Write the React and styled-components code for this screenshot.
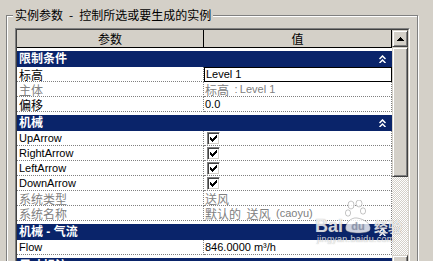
import React from 'react';
import styled, { createGlobalStyle } from 'styled-components';

const GlobalStyle = createGlobalStyle`
  html, body { margin: 0; padding: 0; background: #d4d0c8; overflow: hidden; }
  body {
    font-family: "Liberation Sans", "Noto Sans CJK SC", sans-serif;
    font-size: 11px;
    color: #000;
  }
`;

const Page = styled.div`
  position: relative;
  width: 433px;
  height: 261px;
  overflow: hidden;
  box-sizing: border-box;
  padding: 15px 0 0 6px;
  background: #d4d0c8;
`;

const Group = styled.div`
  position: relative;
  box-sizing: border-box;
  width: 412px;
  height: 320px;
  border: 1px solid #808080;
  box-shadow: inset 1px 1px 0 #fff, 1px 1px 0 #fff;
  padding: 12px 7px 0 8px;
`;

const Legend = styled.div`
  position: absolute;
  top: -8px;
  left: 6px;
  padding: 0 2px;
  background: #d4d0c8;
  font-family: "Noto Sans CJK SC", "Liberation Sans", sans-serif;
  font-size: 12px;
  line-height: 14px;
  white-space: nowrap;
`;

const Well = styled.div`
  border: 1px solid;
  border-color: #808080 #fff #fff #808080;
`;

const WellInner = styled.div`
  display: flex;
  border: 1px solid;
  border-color: #404040 #d4d0c8 #d4d0c8 #404040;
  height: 300px;
  overflow: hidden;
`;

const Table = styled.div`
  width: 375px;
  flex: none;
  background: #fff;
`;

const HeaderRow = styled.div`
  display: grid;
  grid-template-columns: 187px 188px;
  height: 18px;
`;

const HeaderCell = styled.div`
  box-sizing: border-box;
  display: flex;
  align-items: center;
  justify-content: center;
  background: #d4d0c8;
  border-right: 1px solid #000;
  border-bottom: 1px solid #000;
  font-family: "Noto Sans CJK SC", sans-serif;
  font-size: 12px;
  line-height: 14px;
`;

const Category = styled.div`
  height: 19px;
  box-sizing: border-box;
  padding-top: 3px;
  background: #fff;
`;

const CatBar = styled.div`
  height: 16px;
  display: flex;
  align-items: center;
  justify-content: space-between;
  padding: 0 6px 0 2px;
  background: #0a246a;
  color: #fff;
  font-weight: bold;
  font-size: 12px;
  line-height: 14px;
  white-space: nowrap;
`;

const Row = styled.div`
  display: grid;
  grid-template-columns: 187px 188px;
  height: 15px;
`;

const Cell = styled.div`
  box-sizing: border-box;
  display: flex;
  align-items: center;
  padding-left: ${p => (p.$value ? '1px' : '2px')};
  border-right: 1px dotted #808080;
  border-bottom: 1px dotted #808080;
  color: ${p => (p.$disabled ? '#808080' : '#000')};
  line-height: 14px;
  white-space: pre;
  overflow: hidden;
`;

const EditCell = styled.div`
  box-sizing: border-box;
  display: flex;
  align-items: center;
  padding-left: 1px;
  border: 1px solid #000;
  background: #fff;
  line-height: 13px;
  white-space: pre;
`;

const Zh = styled.span`
  font-family: "Noto Sans CJK SC", sans-serif;
  font-size: 12px;
  line-height: 13px;
`;

const CheckBox = styled.span`
  box-sizing: border-box;
  width: 13px;
  height: 13px;
  margin-left: 2px;
  display: flex;
  align-items: center;
  justify-content: center;
  border: 1px solid;
  border-color: #808080 #fff #fff #808080;
  box-shadow: inset 1px 1px 0 #404040, inset -1px -1px 0 #d4d0c8;
  background: #fff;
`;

const Scroll = styled.div`
  width: 16px;
  flex: none;
  display: flex;
  flex-direction: column;
`;

const raised = `
  box-sizing: border-box;
  border: 1px solid;
  border-color: #d4d0c8 #404040 #404040 #d4d0c8;
  box-shadow: inset 1px 1px 0 #fff, inset -1px -1px 0 #808080;
  background: #d4d0c8;
`;

const ScrollButton = styled.div`
  ${raised}
  height: 17px;
  flex: none;
  display: flex;
  align-items: center;
  justify-content: center;
`;

const Thumb = styled.div`
  ${raised}
  height: 130px;
  flex: none;
`;

const Track = styled.div`
  height: 78px;
  flex: none;
  background: repeating-conic-gradient(#fff 0 25%, #d4d0c8 0 50%) 0 0 / 2px 2px;
`;

const Watermark = styled.div`
  position: absolute;
  left: 315px;
  top: 200px;
  display: flex;
  flex-direction: column;
  align-items: flex-start;
  color: rgba(255, 255, 255, 0.78);
  text-shadow: 0 0 1px rgba(90, 90, 90, 0.55);
  pointer-events: none;
`;

const MarkTop = styled.div`
  display: flex;
  align-items: flex-end;
`;

const MarkBai = styled.span`
  font-family: "Liberation Sans", sans-serif;
  font-weight: bold;
  font-size: 18px;
  line-height: 16px;
`;

const MarkJy = styled.span`
  font-family: "Noto Sans CJK SC", sans-serif;
  font-weight: bold;
  font-size: 14px;
  line-height: 16px;
  margin-left: 1px;
`;

const MarkUrl = styled.span`
  font-family: "Liberation Sans", sans-serif;
  font-size: 9px;
  line-height: 10px;
  margin-left: 2px;
  letter-spacing: 0.3px;
`;

const zhRe = /([\u3400-\u9fff]+)/;
const txt = s =>
  s.split(zhRe).map((part, i) =>
    zhRe.test(part) ? <Zh key={i}>{part}</Zh> : <React.Fragment key={i}>{part}</React.Fragment>
  );

const Chevron = () => (
  <svg width="7" height="8" viewBox="0 0 7 8">
    <polyline points="0.5,4 3.5,1 6.5,4" fill="none" stroke="#fff" strokeWidth="1.5" />
    <polyline points="0.5,8 3.5,5 6.5,8" fill="none" stroke="#fff" strokeWidth="1.5" />
  </svg>
);

const Check = () => (
  <svg width="7" height="7" viewBox="0 0 7 7" shapeRendering="crispEdges">
    <path d="M0 2 L2 4 L7 -1 L7 2 L2 7 L0 5 Z" fill="#000" />
  </svg>
);

const Arrow = ({ down }) => (
  <svg width="7" height="4" viewBox="0 0 7 4" shapeRendering="crispEdges">
    {down ? <path d="M0 0 H7 L3.5 4 Z" fill="#000" /> : <path d="M3.5 0 L7 4 H0 Z" fill="#000" />}
  </svg>
);

const Paw = () => (
  <svg width="30" height="34" viewBox="0 0 30 34">
    <g fill="rgba(255,255,255,0.8)" stroke="rgba(110,110,110,0.5)" strokeWidth="0.8">
      <ellipse cx="8" cy="5" rx="3" ry="4" />
      <ellipse cx="16" cy="3.5" rx="3" ry="3.5" />
      <ellipse cx="5" cy="13" rx="2.6" ry="3.2" />
      <ellipse cx="20" cy="11" rx="2.6" ry="3.2" />
      <path d="M3 30 C1 24 8 17 14 18 C21 19 29 24 27 30 C26 34 5 34 3 30 Z" />
    </g>
    <text x="15" y="30" textAnchor="middle" fontFamily="Liberation Sans, sans-serif" fontWeight="bold"
      fontSize="11" fill="rgba(120,130,160,0.6)">du</text>
  </svg>
);

const sections = [
  {
    title: '限制条件',
    rows: [
      { name: '标高', value: 'Level 1', edit: true },
      { name: '主体', value: '标高\u2002:\u2009Level 1', disabled: true },
      { name: '偏移', value: '0.0' },
    ],
  },
  {
    title: '机械',
    rows: [
      { name: 'UpArrow', check: true },
      { name: 'RightArrow', check: true },
      { name: 'LeftArrow', check: true },
      { name: 'DownArrow', check: true },
      { name: '系统类型', value: '送风', disabled: true },
      { name: '系统名称', value: '默认的\u2002送风\u2002(caoyu)', disabled: true },
    ],
  },
  {
    title: '机械 - 气流',
    rows: [{ name: 'Flow', value: '846.0000 m³/h' }],
  },
  {
    title: '尺寸标注',
    rows: [],
  },
];

export default function App() {
  return (
    <>
      <GlobalStyle />
      <Page>
        <Group>
          <Legend>实例参数{'\u2002-\u2002'}控制所选或要生成的实例</Legend>
          <Well>
            <WellInner>
              <Table>
                <HeaderRow>
                  <HeaderCell>参数</HeaderCell>
                  <HeaderCell>值</HeaderCell>
                </HeaderRow>
                {sections.map(sec => (
                  <React.Fragment key={sec.title}>
                    <Category>
                      <CatBar>
                        <span>{sec.title}</span>
                        <Chevron />
                      </CatBar>
                    </Category>
                    {sec.rows.map(r => (
                      <Row key={r.name}>
                        <Cell $disabled={r.disabled}>{txt(r.name)}</Cell>
                        {r.edit ? (
                          <EditCell>{txt(r.value)}</EditCell>
                        ) : (
                          <Cell $value $disabled={r.disabled}>
                            {r.check ? (
                              <CheckBox>
                                <Check />
                              </CheckBox>
                            ) : (
                              txt(r.value)
                            )}
                          </Cell>
                        )}
                      </Row>
                    ))}
                  </React.Fragment>
                ))}
              </Table>
              <Scroll>
                <ScrollButton>
                  <Arrow />
                </ScrollButton>
                <Thumb />
                <Track />
                <ScrollButton>
                  <Arrow down />
                </ScrollButton>
              </Scroll>
            </WellInner>
          </Well>
        </Group>
        <Watermark>
          <MarkTop>
            <MarkBai>Bai</MarkBai>
            <Paw />
            <MarkJy>经验</MarkJy>
          </MarkTop>
          <MarkUrl>jingyan.baidu.com</MarkUrl>
        </Watermark>
      </Page>
    </>
  );
}
